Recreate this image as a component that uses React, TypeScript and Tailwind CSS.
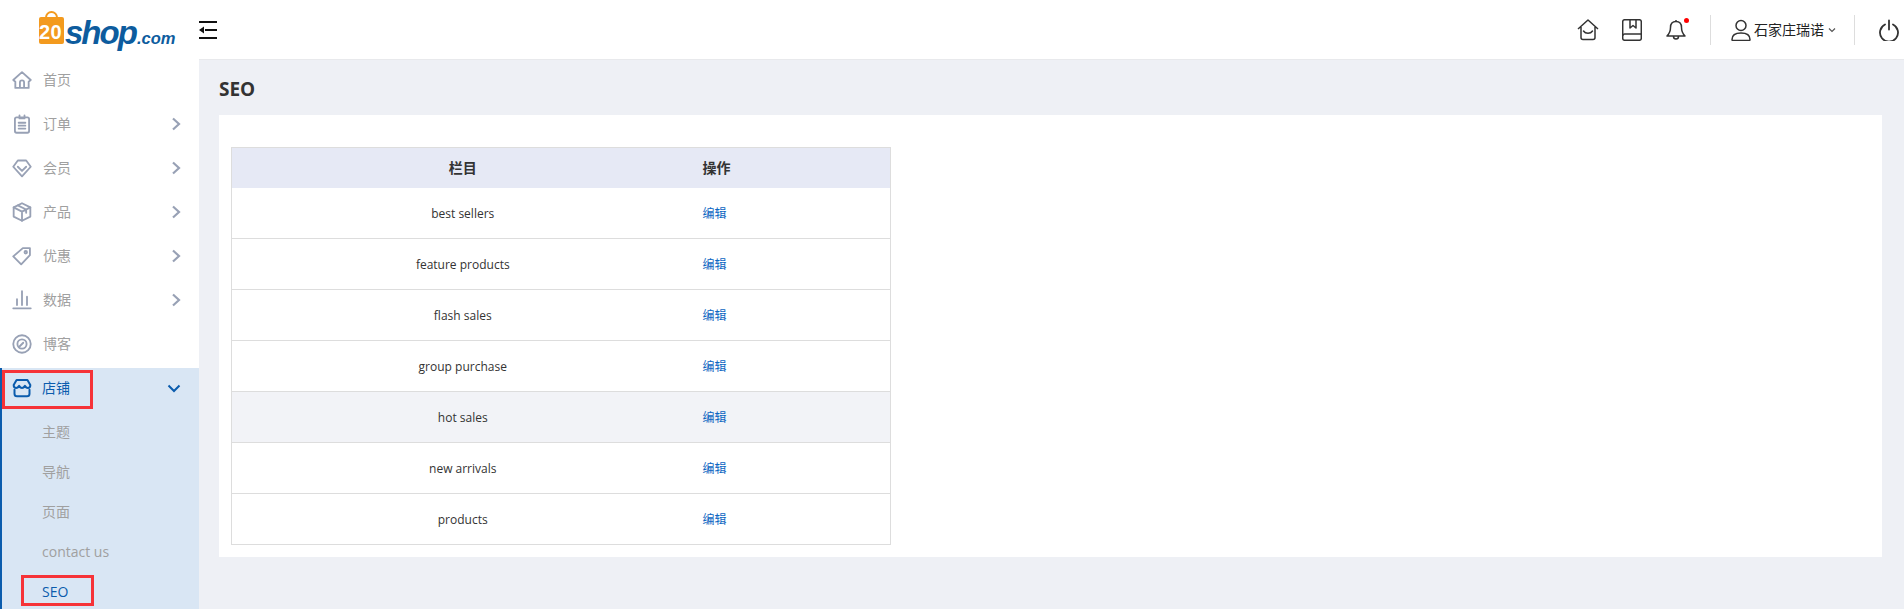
import React from "react";

const gray = "#98a1b5";

const paths: Record<string, React.ReactNode> = {
  home: (<><path d="M1.500 12 12 2.500 22.500 12 20 14v7.500H4V14z" /><path d="M9.500 20v-5a2.500 2.500 0 0 1 5 0v5" /></>),
  order: (<><rect x="3.500" y="4" width="17" height="18.500" rx="2" /><path d="M9 1.800v3.500h6V1.800M8 10.500h8M8 14h8M8 17.500h8" /></>),
  member: (<><path d="M7 3h10l5.500 7.500L12 22 1.500 10.500z" /><path d="M7 10.500l5 5 5-5" /></>),
  product: (<><path d="M12 1.500 22 6.500v11l-10 5-10-5v-11z" /><path d="M2 6.500l10 5 10-5M12 11.500v11M7 4l10 5v4" /></>),
  tag: (<><path d="M13 2.500h8.500V11L11 22 1.500 12.500z" /><circle cx="16.500" cy="7.500" r="1.500" /></>),
  data: (<><path d="M1.500 22h21M6 18v-7M12 18V1.500M18 18V8" /></>),
  blog: (<><circle cx="12" cy="12" r="10.500" /><circle cx="12" cy="12" r="5.500" /><path d="M9 15l4.500-4.500" /></>),
  shop: (<><path d="M5.500 2.500h13L22 8.500c0 2.500-1.800 3.500-3 3.500-1.500 0-2.500-1-3.500-2.500-1 1.500-2 2.500-3.500 2.500s-2.500-1-3.500-2.500C7.500 11 6.500 12 5 12c-1.200 0-3-1-3-3.500z" /><path d="M3 14v5a3 3 0 0 0 3 3h12a3 3 0 0 0 3-3v-5" /></>),
};

function Icon({ name, color = gray, w = 2.200 }: { name: string; color?: string; w?: number }) {
  return (
    <svg width="20" height="20" viewBox="0 0 24 24" fill="none" stroke={color} strokeWidth={w} strokeLinejoin="round" strokeLinecap="round" className="shrink-0">
      {paths[name]}
    </svg>
  );
}

function Chevron() {
  return (
    <svg width="10" height="14" viewBox="0 0 10 14" fill="none" stroke={gray} strokeWidth="2.200" className="ml-auto">
      <path d="M2 1.500 8 7l-6 5.500" />
    </svg>
  );
}

const menu = [
  { n: "home", t: "首页" },
  { n: "order", t: "订单", c: true },
  { n: "member", t: "会员", c: true },
  { n: "product", t: "产品", c: true },
  { n: "tag", t: "优惠", c: true },
  { n: "data", t: "数据", c: true },
  { n: "blog", t: "博客" },
];

const rows = ["best sellers", "feature products", "flash sales", "group purchase", "hot sales", "new arrivals", "products"];

function Logo() {
  return (
    <div className="h-[36px] ml-[39px] relative w-[138px] -mt-[2px]">
      <svg width="25" height="33" viewBox="0 0 25 33" className="absolute left-0 top-0">
        <path d="M7 10V6.500a5.500 5.500 0 0 1 11 0V10" fill="none" stroke="#f39a1e" strokeWidth="2" />
        <rect x="0" y="6" width="25" height="27" rx="2" fill="#f39a1e" />
      </svg>
      <span className="absolute left-[0px] top-[11px] text-[20px] leading-[20px] font-bold text-white font-['Liberation_Sans',sans-serif] tracking-[0.5px]">20</span>
      <span className="absolute left-[26px] top-[4px] text-[33px] leading-[36px] font-bold italic text-[#0d5c9e] font-['Liberation_Sans',sans-serif] tracking-[-2px]">shop</span>
      <span className="absolute left-[98px] top-[16px] text-[16.500px] leading-[22px] font-bold italic text-[#0d5c9e] font-['Liberation_Sans',sans-serif]">.com</span>
    </div>
  );
}

export default function App() {
  return (
    <div className="h-[609px] w-[1904px] overflow-hidden flex flex-col bg-[#eef0f5] text-[#333] font-['Open_Sans','Noto_Sans_CJK_SC',sans-serif]">
      <header className="h-[60px] shrink-0 bg-white border-b border-[#e8e9ec] flex items-center">
        <Logo />
        <svg width="18" height="18" viewBox="0 0 18 18" className="ml-[22px]" fill="#111">
          <rect x="0" y="0" width="18" height="2" />
          <rect x="6" y="8" width="12" height="2" />
          <rect x="0" y="16" width="18" height="2" />
          <path d="M0 9l5-3.500v7z" />
        </svg>
        <div className="ml-auto flex items-center text-[#333]">
          <svg width="22" height="22" viewBox="0 0 22 22" fill="none" stroke="#333" strokeWidth="1.500" strokeLinejoin="round" className="mr-[23px]">
            <path d="M1 10 11 1l10 9M4 8v10.500a2 2 0 0 0 2 2h10a2 2 0 0 0 2-2V8" />
            <path d="M6.500 12c2 3 7 3 9 0" strokeLinecap="round" />
          </svg>
          <svg width="20" height="22" viewBox="0 0 20 22" fill="none" stroke="#333" strokeWidth="1.500" strokeLinejoin="round" className="mr-[24px]">
            <rect x="0.700" y="0.700" width="18.600" height="20.600" rx="2" />
            <path d="M0.700 17a2 2 0 0 1 2-2h16.600M8 1v8l3-2.500L14 9V1" />
          </svg>
          <div className="relative mr-[24px]">
            <svg width="20" height="22" viewBox="0 0 20 22" fill="none" stroke="#333" strokeWidth="1.500" strokeLinejoin="round">
              <path d="M10 2.500c-3.500 0-5.500 2.500-5.500 6 0 5-2 7-3.500 8.500h18c-1.500-1.500-3.500-3.500-3.500-8.500 0-3.500-2-6-5.500-6zM10 1v1.500M7.500 17.500a2.500 2.500 0 0 0 5 0" />
            </svg>
            <span className="absolute right-[-3px] top-[-1px] w-[5px] h-[5px] rounded-full bg-[#f00]" />
          </div>
          <div className="w-px h-[30px] bg-[#ddd]" />
          <svg width="20" height="22" viewBox="0 0 20 22" fill="none" stroke="#333" strokeWidth="1.500" className="ml-[20px] mr-[3px]">
            <circle cx="10" cy="6.500" r="5" />
            <path d="M1 20.500c0-4 3-6.500 9-6.500s9 2.500 9 6.500c0 .6-.4 1-1 1H2c-.6 0-1-.4-1-1z" />
          </svg>
          <span className="text-[14px] leading-[20px] text-[#222] font-['Noto_Sans_CJK_SC',sans-serif] w-[70px] pb-[2px]">石家庄瑞诺</span>
          <svg width="8" height="6" viewBox="0 0 8 6" fill="none" stroke="#555" strokeWidth="1.200" className="ml-[4px] mr-[18px]">
            <path d="M1 1.500 4 4.500l3-3" />
          </svg>
          <div className="w-px h-[30px] bg-[#ddd]" />
          <svg width="20" height="22" viewBox="0 0 20 22" fill="none" stroke="#333" strokeWidth="1.800" strokeLinecap="round" className="ml-[24px] mr-[5px]">
            <path d="M6 5.500a9 9 0 1 0 8 0M10 1.500v9" />
          </svg>
        </div>
      </header>
      <div className="flex flex-1 min-h-0">
        <aside className="w-[199px] shrink-0 bg-white relative -mt-[1px]">
          <div className="pt-[1px]">
            {menu.map((m) => (
              <div key={m.t} className="h-[40px] mb-[4px] flex items-center pl-[12px] pr-[18px] text-[14px] text-[#a0a0a0]">
                <Icon name={m.n} />
                <span className="ml-[11px] pb-[1px]">{m.t}</span>
                {m.c && <Chevron />}
              </div>
            ))}
          </div>
          <div className="bg-[#d9e6f4] border-l-[2px] border-[#0b5cad]">
            <div className="h-[40px] mb-[4px] flex items-center pl-[10px] pr-[18px] text-[14px] text-[#0b5cad]">
              <Icon name="shop" color="#0b5cad" w={2.400} />
              <span className="ml-[10px] pb-[1px]">店铺</span>
              <svg width="14" height="9" viewBox="0 0 14 9" fill="none" stroke="#0b5cad" strokeWidth="2" className="ml-auto">
                <path d="M1.500 1.500 7 7l5.500-5.500" />
              </svg>
            </div>
            {["主题", "导航", "页面", "contact us"].map((t) => (
              <div key={t} className="h-[40px] flex items-center pl-[40px] pb-[2px] text-[14px] text-[#a0a0a0]">{t}</div>
            ))}
            <div className="h-[40px] flex items-center pl-[40px] pb-[2px] text-[14px] text-[#0b5cad]">SEO</div>
          </div>
          <div className="absolute left-[2px] top-[311px] w-[91px] h-[39px] border-[3px] border-[#f63338]" />
          <div className="absolute left-[21px] top-[516px] w-[73px] h-[31px] border-[3px] border-[#f63338]" />
        </aside>
        <main className="flex-1 min-w-0 pl-[20px] pr-[22px]">
          <h1 className="h-[55px] flex items-center text-[19px] font-bold text-[#333] pt-[3px]">SEO</h1>
          <div className="bg-white pt-[32px] pb-[12px] px-[12px]">
            <table className="w-[660px] border-collapse table-fixed text-[12px]">
              <thead>
                <tr className="h-[40px] bg-[#e6e9f5]">
                  <th className="w-[462px] border-t border-l border-[#ddd] font-semibold text-center text-[14px]">栏目</th>
                  <th className="border-t border-r border-[#ddd] font-semibold text-left pl-[9px] text-[14px]">操作</th>
                </tr>
              </thead>
              <tbody>
                {rows.map((r) => (
                  <tr key={r} className={`h-[51px] ${r === "hot sales" ? "bg-[#f2f3f7]" : ""}`}>
                    <td className="border-b border-l border-[#ddd] text-center pt-[2px]">{r}</td>
                    <td className="border-b border-r border-[#ddd] pl-[9px] pt-[2px] text-[#0b66c2]">编辑</td>
                  </tr>
                ))}
              </tbody>
            </table>
          </div>
        </main>
      </div>
    </div>
  );
}
